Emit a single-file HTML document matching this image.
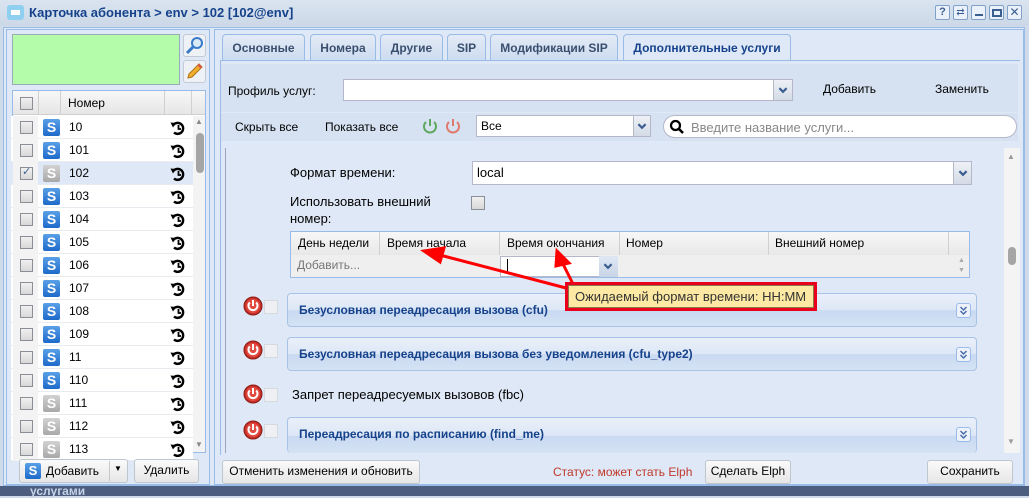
<!DOCTYPE html>
<html><head><meta charset="utf-8"><style>
*{box-sizing:border-box;margin:0;padding:0}
body{width:1029px;height:496px;overflow:hidden;background:#cfdbea;font-family:"Liberation Sans",Arial,sans-serif;font-size:12px;color:#000;position:relative}
.a{position:absolute}
.t{position:absolute;white-space:nowrap}
svg{display:block}
.btn{position:absolute;border:1px solid #c0c6ce;border-radius:3px;background:linear-gradient(#fafafa,#e6e6e6);text-align:center;line-height:21px;font-size:12px}
.cb{position:absolute;width:13px;height:13px;border:1px solid #8a8f96;background:linear-gradient(#f0f0f0,#d8d8d8)}
.sic{position:absolute;width:17px;height:17px;border-radius:2px;color:#fff;font-weight:bold;font-size:14px;line-height:17px;text-align:center}
.blue{background:linear-gradient(#5aa0e8,#1d6ac9)}
.gray{background:linear-gradient(#d2d2d2,#a8a8a8)}
.row{position:absolute;left:11px;width:182px;height:23px;border-bottom:1px solid #e8ebef;background:#fff}
.tab{position:absolute;top:34px;height:26px;border:1px solid #99bbe8;border-bottom:none;border-radius:4px 4px 0 0;background:linear-gradient(#e3ebf6,#cddcf0);font-weight:bold;color:#3a4f6e;font-size:12px;line-height:26px;text-align:center}
.sec{position:absolute;left:287px;width:690px;height:34px;border:1px solid #a9c3e8;border-radius:4px;background:linear-gradient(#eaf0fa 0,#dde7f6 50%,#c9d9f1 52%,#d5e2f4 100%);font-weight:bold;color:#15428b;padding-left:11px;line-height:32px}
.exp{position:absolute;right:5px;top:9px;width:15px;height:15px;border:1px solid #99bbe8;border-radius:3px;background:#eef3fb;line-height:0}
.dd{position:absolute;background:linear-gradient(#eef1f6,#d4dbe6);border-left:1px solid #b5b8c8}
</style></head><body>
<svg width="0" height="0" style="position:absolute"><defs>
<symbol id="chev" viewBox="0 0 10 10"><path d="M2 3.5 L5 6.5 L8 3.5" stroke="#3b5e91" stroke-width="1.8" fill="none"/></symbol>
<symbol id="dchev" viewBox="0 0 13 13"><path d="M3.5 3 L6.5 6 L9.5 3 M3.5 7 L6.5 10 L9.5 7" stroke="#4a6da8" stroke-width="1.5" fill="none"/></symbol>
<symbol id="hist" viewBox="0 0 16 16"><path d="M3.3 5 A5.5 5.5 0 1 1 4 12.5" stroke="#000" stroke-width="2.4" fill="none"/><path d="M0.5 2.5 L6 3 L3 7.5 Z" fill="#000"/><path d="M8.5 5 L8.5 9 L11 9" stroke="#000" stroke-width="1.8" fill="none"/></symbol>
<symbol id="pw" viewBox="0 0 20 20"><circle cx="10" cy="10" r="9" fill="#c8302a" stroke="#8a1a14"/><circle cx="10" cy="10" r="7" fill="#e04a3f"/><path d="M6.8 6.5 A4.5 4.5 0 1 0 13.2 6.5" stroke="#fff" stroke-width="2" fill="none"/><line x1="10" y1="4" x2="10" y2="10" stroke="#fff" stroke-width="2"/></symbol>
</defs></svg>
<!-- title -->
<div class="a" style="left:0;top:0;width:1029px;height:26px;background:linear-gradient(#dae4f0,#ccd8e7)"></div>
<div class="a" style="left:7px;top:5px;width:17px;height:15px;border-radius:3px;background:#8fd0f0"></div>
<div class="a" style="left:11px;top:10px;width:9px;height:5px;background:#fff"></div>
<div class="t" style="left:29px;top:5px;font-weight:bold;font-size:13px;color:#15428b">Карточка абонента &gt; env &gt; 102 [102@env]</div>
<div class="a" style="left:935px;top:5px;width:88px;height:16px">
<span class="a" style="left:0;width:15px;height:15px;border:1px solid #7fa0c8;border-radius:2px;background:#eaf1fb;color:#3b5e91;font-size:11px;font-weight:bold;text-align:center;line-height:13px">?</span>
<span class="a" style="left:18px;width:15px;height:15px;border:1px solid #7fa0c8;border-radius:2px;background:#eaf1fb;color:#3b5e91;font-size:10px;text-align:center;line-height:13px">⇄</span>
<span class="a" style="left:36px;width:15px;height:15px;border:1px solid #7fa0c8;border-radius:2px;background:#eaf1fb"><i class="a" style="left:3px;top:8px;width:8px;height:2px;background:#3b5e91"></i></span>
<span class="a" style="left:54px;width:15px;height:15px;border:1px solid #7fa0c8;border-radius:2px;background:#eaf1fb"><i class="a" style="left:2px;top:3px;width:10px;height:8px;border:2px solid #3b5e91"></i></span>
<span class="a" style="left:72px;width:15px;height:15px;border:1px solid #7fa0c8;border-radius:2px;background:#eaf1fb;color:#3b5e91;font-size:12px;text-align:center;line-height:13px">✕</span>
</div>
<!-- frame -->
<div class="a" style="left:3px;top:27px;width:1022px;height:459px;background:#dfe8f6;border:1px solid #99bbe8"></div>
<div class="a" style="left:0;top:486px;width:1029px;height:10px;background:#4c5d80"></div>
<div class="t" style="left:30px;top:484px;font-size:12px;color:#c6d2e6;font-weight:bold">услугами</div>
<!-- left panel -->
<div class="a" style="left:6px;top:29px;width:204px;height:456px;border:1px solid #99bbe8;background:#dfe8f6"></div>
<div class="a" style="left:12px;top:34px;width:168px;height:51px;background:#b4fcaa;border:1px solid #9ab"></div>
<div class="a" style="left:183px;top:34px;width:23px;height:23px;border:1px solid #c3cad3;border-radius:3px;background:#eef1f5">
<svg width="21" height="21"><circle cx="13" cy="8" r="5" stroke="#3a7bc8" stroke-width="2" fill="#dbeaf8"/><line x1="9.5" y1="11.5" x2="3" y2="18" stroke="#3a7bc8" stroke-width="3"/></svg></div>
<div class="a" style="left:183px;top:60px;width:23px;height:23px;border:1px solid #c3cad3;border-radius:3px;background:#eef1f5">
<svg width="21" height="21"><path d="M15 3 L18 6 L8 16 L4 17 L5 13 Z" fill="#f0b030" stroke="#b07010"/><path d="M15 3 L18 6 L16.5 7.5 L13.5 4.5Z" fill="#e05050"/></svg></div>
<div class="a" style="left:12px;top:90px;width:194px;height:363px;border:1px solid #99bbe8;background:#fff"></div>
<div class="a" style="left:13px;top:91px;width:192px;height:24px;background:linear-gradient(#f7f7f7,#e6e6e6);border-bottom:1px solid #d0d0d0"></div>
<div class="a" style="left:38px;top:91px;width:1px;height:24px;background:#d0d0d0"></div>
<div class="a" style="left:60px;top:91px;width:1px;height:24px;background:#d0d0d0"></div>
<div class="a" style="left:164px;top:91px;width:1px;height:24px;background:#d0d0d0"></div>
<div class="a" style="left:191px;top:91px;width:1px;height:24px;background:#d0d0d0"></div>
<div class="cb" style="left:20px;top:97px"></div>
<div class="t" style="left:68px;top:96px">Номер</div>
<div class="a" style="left:193px;top:116px;width:12px;height:336px;background:#f3f3f3"></div>
<div class="a" style="left:196px;top:133px;width:8px;height:40px;border-radius:4px;background:#a5a5a5"></div>
<div class="t" style="left:195px;top:117px;font-size:8px;color:#888">▲</div>
<div class="t" style="left:195px;top:440px;font-size:8px;color:#888">▼</div>
<div id="rows"></div>
<!-- bottom left buttons -->
<div class="btn" style="left:19px;top:459px;width:109px;height:24px"></div>
<div class="sic blue" style="left:25px;top:463px;width:16px;height:16px;font-size:13px;line-height:16px">S</div>
<div class="t" style="left:46px;top:464px">Добавить</div>
<div class="a" style="left:109px;top:461px;width:1px;height:20px;background:#c8c8c8"></div>
<div class="t" style="left:114px;top:464px;font-size:8px">▼</div>
<div class="btn" style="left:134px;top:459px;width:65px;height:24px">Удалить</div>
<!-- right panel -->
<div class="a" style="left:214px;top:29px;width:810px;height:456px;border:1px solid #99bbe8;background:#dfe8f6"></div>
<div class="tab" style="left:222px;width:83px">Основные</div>
<div class="tab" style="left:310px;width:66px">Номера</div>
<div class="tab" style="left:380px;width:63px">Другие</div>
<div class="tab" style="left:447px;width:39px">SIP</div>
<div class="tab" style="left:490px;width:128px">Модификации SIP</div>
<div class="tab" style="left:623px;width:168px;height:27px;background:#dfe8f6;color:#15428b">Дополнительные услуги</div>
<div class="a" style="left:220px;top:60px;width:800px;height:1px;background:#99bbe8"></div>
<div class="a" style="left:220px;top:60px;width:1px;height:395px;background:#99bbe8"></div>
<div class="a" style="left:221px;top:64px;width:797px;height:48px;background:#d6e2f2"></div>
<div class="t" style="left:228px;top:84px">Профиль услуг:</div>
<div class="a" style="left:343px;top:79px;width:450px;height:22px;border:1px solid #b5b8c8;background:#fff"></div>
<div class="dd" style="left:773px;top:80px;width:19px;height:20px"><svg class="a" style="left:3px;top:4px" width="12" height="12"><use href="#chev"/></svg></div>
<div class="t" style="left:823px;top:82px">Добавить</div>
<div class="t" style="left:935px;top:82px">Заменить</div>
<div class="a" style="left:221px;top:113px;width:797px;height:28px;background:#d6e2f2"></div>
<div class="t" style="left:235px;top:120px">Скрыть все</div>
<div class="t" style="left:325px;top:120px">Показать все</div>
<svg class="a" style="left:421px;top:117px" width="18" height="18"><path d="M5 5 A6 6 0 1 0 13 5" stroke="#5fa85f" stroke-width="2" fill="none"/><line x1="9" y1="2" x2="9" y2="9" stroke="#5fa85f" stroke-width="2"/></svg>
<svg class="a" style="left:444px;top:117px" width="18" height="18"><path d="M5 5 A6 6 0 1 0 13 5" stroke="#e07a6e" stroke-width="2" fill="none"/><line x1="9" y1="2" x2="9" y2="9" stroke="#e07a6e" stroke-width="2"/></svg>
<div class="a" style="left:476px;top:115px;width:175px;height:22px;border:1px solid #b5b8c8;background:#fff"></div>
<div class="t" style="left:481px;top:119px">Все</div>
<div class="dd" style="left:633px;top:116px;width:17px;height:20px"><svg class="a" style="left:2px;top:4px" width="12" height="12"><use href="#chev"/></svg></div>
<div class="a" style="left:663px;top:115px;width:354px;height:23px;border:1px solid #b5b8c8;border-radius:12px;background:#fff"></div>
<svg class="a" style="left:669px;top:119px" width="16" height="16"><circle cx="6.5" cy="6.5" r="4.5" stroke="#000" stroke-width="2.2" fill="none"/><line x1="10" y1="10" x2="14" y2="14" stroke="#000" stroke-width="2.6"/></svg>
<div class="t" style="left:691px;top:120px;color:#888;font-size:13px">Введите название услуги...</div>
<!-- scroll area -->
<div class="a" style="left:225px;top:148px;width:1px;height:305px;background:#99a8bd"></div>
<div class="a" style="left:1004px;top:148px;width:16px;height:305px;background:#f4f4f4"></div>
<div class="a" style="left:1008px;top:247px;width:8px;height:18px;border-radius:4px;background:#a5a5a5"></div>
<div class="t" style="left:1007px;top:152px;font-size:8px;color:#999">▲</div>
<div class="t" style="left:1007px;top:437px;font-size:8px;color:#999">▼</div>
<div class="t" style="left:290px;top:165px;font-size:13px">Формат времени:</div>
<div class="a" style="left:472px;top:161px;width:500px;height:24px;border:1px solid #b5b8c8;background:#fff"></div>
<div class="t" style="left:477px;top:165px;font-size:13px">local</div>
<div class="dd" style="left:953px;top:162px;width:18px;height:22px"><svg class="a" style="left:3px;top:5px" width="12" height="12"><use href="#chev"/></svg></div>
<div class="t" style="left:290px;top:193px;font-size:13px;line-height:17px">Использовать внешний<br>номер:</div>
<div class="cb" style="left:471px;top:196px;width:14px;height:14px"></div>
<div class="a" style="left:290px;top:231px;width:680px;height:47px;border:1px solid #99bbe8;background:#efefef"></div>
<div class="a" style="left:291px;top:232px;width:678px;height:23px;background:linear-gradient(#f7f7f7,#e8e8e8)"></div>
<div class="t" style="left:298px;top:236px">День недели</div>
<div class="a" style="left:379px;top:232px;width:1px;height:23px;background:#d0d0d0"></div>
<div class="t" style="left:387px;top:236px">Время начала</div>
<div class="a" style="left:499px;top:232px;width:1px;height:23px;background:#d0d0d0"></div>
<div class="t" style="left:507px;top:236px">Время окончания</div>
<div class="a" style="left:619px;top:232px;width:1px;height:23px;background:#d0d0d0"></div>
<div class="t" style="left:626px;top:236px">Номер</div>
<div class="a" style="left:768px;top:232px;width:1px;height:23px;background:#d0d0d0"></div>
<div class="t" style="left:775px;top:236px">Внешний номер</div>
<div class="a" style="left:948px;top:232px;width:1px;height:23px;background:#d0d0d0"></div>
<div class="t" style="left:297px;top:258px;color:#777">Добавить...</div>
<div class="a" style="left:500px;top:256px;width:118px;height:21px;border:1px solid #b5b8c8;background:#fff"></div>
<div class="a" style="left:507px;top:259px;width:1px;height:14px;background:#000"></div>
<div class="a" style="left:599px;top:256px;width:19px;height:21px;background:linear-gradient(#dfe7f3,#c8d4e6)"><svg class="a" style="left:3px;top:4px" width="12" height="12"><use href="#chev"/></svg></div>
<div class="t" style="left:958px;top:256px;font-size:7px;color:#aaa;line-height:10px">▲<br>▼</div>
<!-- sections -->
<svg class="a" style="left:243px;top:296px" width="20" height="20"><use href="#pw"/></svg><div class="cb" style="left:264px;top:300px;width:14px;height:14px;border-color:#d6d9de;background:#eef0f3"></div>
<div class="sec" style="top:293px">Безусловная переадресация вызова (cfu)<div class="exp"><svg width="13" height="13"><use href="#dchev"/></svg></div></div>
<svg class="a" style="left:243px;top:340px" width="20" height="20"><use href="#pw"/></svg><div class="cb" style="left:264px;top:344px;width:14px;height:14px;border-color:#d6d9de;background:#eef0f3"></div>
<div class="sec" style="top:337px">Безусловная переадресация вызова без уведомления (cfu_type2)<div class="exp"><svg width="13" height="13"><use href="#dchev"/></svg></div></div>
<svg class="a" style="left:243px;top:384px" width="20" height="20"><use href="#pw"/></svg><div class="cb" style="left:264px;top:388px;width:14px;height:14px;border-color:#d6d9de;background:#eef0f3"></div>
<div class="t" style="left:292px;top:387px;font-size:13px">Запрет переадресуемых вызовов (fbc)</div>
<svg class="a" style="left:243px;top:420px" width="20" height="20"><use href="#pw"/></svg><div class="cb" style="left:264px;top:424px;width:14px;height:14px;border-color:#d6d9de;background:#eef0f3"></div>
<div class="sec" style="top:417px;height:36px;border-bottom:none">Переадресация по расписанию (find_me)<div class="exp"><svg width="13" height="13"><use href="#dchev"/></svg></div></div>
<!-- tooltip -->
<svg class="a" style="left:0;top:0" width="1029" height="496"><g stroke="#f00" stroke-width="3" fill="#f00">
<line x1="566" y1="288" x2="436" y2="254"/><polygon points="424,251 444,248 440,262"/>
<line x1="575" y1="288" x2="562" y2="262"/><polygon points="557,251 569,263 556,266"/></g></svg>
<div class="a" style="left:565px;top:282px;width:252px;height:29px;border:3px solid #e8001c;background:#fff"></div>
<div class="a" style="left:568px;top:285px;width:246px;height:23px;background:#fde9a3;border:1px solid #8a7a4a"></div>
<div class="t" style="left:575px;top:289px;font-size:13px;color:#333">Ожидаемый формат времени: HH:MM</div>
<!-- bottom bar -->
<div class="btn" style="left:222px;top:460px;width:198px;height:24px">Отменить изменения и обновить</div>
<div class="t" style="left:553px;top:465px;color:#c0392b">Статус: может стать Elph</div>
<div class="btn" style="left:705px;top:460px;width:86px;height:24px">Сделать Elph</div>
<div class="btn" style="left:927px;top:460px;width:86px;height:24px">Сохранить</div>
<script>
var n=["10","101","102","103","104","105","106","107","108","109","11","110","111","112","113"],h="";
for(var i=0;i<n.length;i++){var y=116+i*23;var g=(n[i]=="102"||i>=12);
h+='<div class="row" style="top:'+y+'px;'+(n[i]=="102"?'background:#dfe8f6;':'')+'width:182px"></div>';
h+='<div class="a" style="left:13px;top:'+y+'px;width:25px;height:23px;background:#f3f3f3"></div>';
h+='<div class="cb" style="left:20px;top:'+(y+5)+'px">'+(n[i]=="102"?'<span class="a" style="left:1px;top:-3px;font-size:11px;color:#3b5e91">✓</span>':'')+'</div>';
h+='<div class="sic '+(g?'gray':'blue')+'" style="left:43px;top:'+(y+3)+'px">S</div>';
h+='<div class="t" style="left:69px;top:'+(y+4)+'px">'+n[i]+'</div>';
h+='<svg class="a" style="left:170px;top:'+(y+4)+'px" width="16" height="16"><use href="#hist"/></svg>';}
document.getElementById("rows").innerHTML=h;
</script>
</body></html>
